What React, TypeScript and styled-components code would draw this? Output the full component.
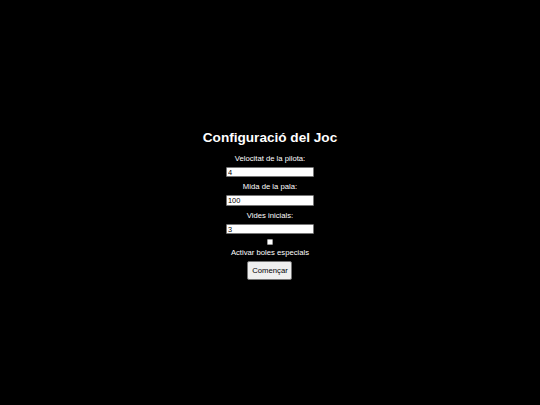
import React from 'react';
import styled, { createGlobalStyle } from 'styled-components';

const GlobalStyle = createGlobalStyle`
  html, body {
    margin: 0;
    padding: 0;
    background: #000;
  }
  body {
    font-family: "Liberation Sans", Arial, sans-serif;
    color: #fff;
  }
`;

const Screen = styled.div`
  display: flex;
  align-items: center;
  justify-content: center;
  min-height: 100vh;
  padding-top: 5px;
  box-sizing: border-box;
`;

const Menu = styled.form`
  display: flex;
  flex-direction: column;
  align-items: center;
`;

const Title = styled.h1`
  margin: 0 0 8px;
  font-size: 13.6px;
  line-height: 16px;
  font-weight: 700;
`;

const Label = styled.label<{ $gap?: number; $after?: number }>`
  display: block;
  font-size: 7.7px;
  line-height: 9px;
  margin-top: ${p => p.$gap ?? 5}px;
  margin-bottom: ${p => p.$after ?? 4}px;
`;

const NumberInput = styled.input`
  box-sizing: border-box;
  width: 88px;
  height: 10.5px;
  margin: 0;
  padding: 0 1px;
  border: 1px solid #767676;
  border-radius: 1px;
  background: #fff;
  color: #000;
  font-family: "Liberation Sans", Arial, sans-serif;
  font-size: 7.4px;
  line-height: 8px;
  outline: none;
`;

const Check = styled.input`
  appearance: none;
  box-sizing: border-box;
  width: 6px;
  height: 6px;
  margin: 5px 0 0;
  border: 1px solid #9a9a9a;
  border-radius: 1px;
  background: #fff;
`;

const StartButton = styled.button`
  width: 45px;
  height: 19px;
  padding: 0;
  border: 1px solid #767676;
  border-radius: 2px;
  background: #efefef;
  color: #000;
  font-family: "Liberation Sans", Arial, sans-serif;
  font-size: 7.7px;
`;

export default function App() {
  return (
    <>
      <GlobalStyle />
      <Screen>
        <Menu onSubmit={e => e.preventDefault()}>
          <Title>Configuració del Joc</Title>
          <Label $gap={0} htmlFor="speed">Velocitat de la pilota:</Label>
          <NumberInput id="speed" type="text" defaultValue="4" />
          <Label htmlFor="paddle">Mida de la pala:</Label>
          <NumberInput id="paddle" type="text" defaultValue="100" />
          <Label htmlFor="lives">Vides inicials:</Label>
          <NumberInput id="lives" type="text" defaultValue="3" />
          <Check id="special" type="checkbox" />
          <Label $gap={3} $after={4} htmlFor="special">Activar boles especials</Label>
          <StartButton type="submit">Començar</StartButton>
        </Menu>
      </Screen>
    </>
  );
}
